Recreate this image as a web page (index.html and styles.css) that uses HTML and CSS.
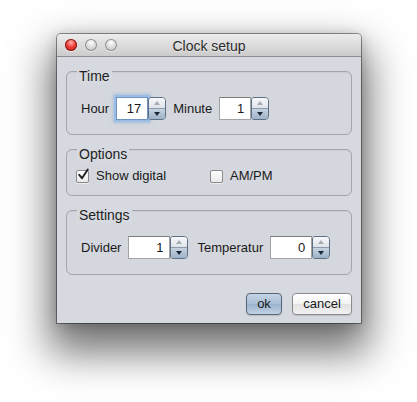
FILE: index.html
```html
<!DOCTYPE html>
<html>
<head>
<meta charset="utf-8">
<title>Clock setup</title>
<link rel="stylesheet" href="styles.css">
</head>
<body>
<div class="window">
  <div class="titlebar">
    <div class="lights">
      <span class="light red"></span>
      <span class="light"></span>
      <span class="light"></span>
    </div>
    <div class="title">Clock setup</div>
    <div></div>
  </div>
  <div class="content">
    <div class="group group-time">
      <div class="legend">Time</div>
      <div class="row">
        <span class="label">Hour</span>
        <div class="spinner">
          <div class="field focused">17</div>
          <div class="stepper"><span class="up"><i></i></span><span class="down"><i></i></span></div>
        </div>
        <span class="label">Minute</span>
        <div class="spinner">
          <div class="field">1</div>
          <div class="stepper"><span class="up"><i></i></span><span class="down"><i></i></span></div>
        </div>
      </div>
    </div>

    <div class="group group-options">
      <div class="legend">Options</div>
      <div class="checks">
        <label class="check">
          <span class="box"><svg width="14" height="14" viewBox="0 0 14 14"><path d="M3.2 6.8 L6 10.2 L11.8 1.5" fill="none" stroke="#1d1d1d" stroke-width="1.9" stroke-linecap="round" stroke-linejoin="round"/></svg></span>
          <span>Show digital</span>
        </label>
        <label class="check">
          <span class="box"></span>
          <span>AM/PM</span>
        </label>
      </div>
    </div>

    <div class="group group-settings">
      <div class="legend">Settings</div>
      <div class="row">
        <span class="label">Divider</span>
        <div class="spinner wide">
          <div class="field">1</div>
          <div class="stepper"><span class="up"><i></i></span><span class="down"><i></i></span></div>
        </div>
        <span class="label second">Temperatur</span>
        <div class="spinner wide">
          <div class="field">0</div>
          <div class="stepper"><span class="up"><i></i></span><span class="down"><i></i></span></div>
        </div>
      </div>
    </div>

    <div class="buttons">
      <button class="btn btn-default">ok</button>
      <button class="btn">cancel</button>
    </div>
  </div>
</div>
</body>
</html>
```

FILE: styles.css
```css
* { box-sizing: border-box; }

html, body {
  margin: 0;
  padding: 0;
  background: #ffffff;
}

body {
  font-family: "Liberation Sans", Arial, sans-serif;
  font-size: 13px;
  color: #1a1a1a;
  width: 417px;
  height: 402px;
  overflow: hidden;
}

.window {
  margin: 34px 0 0 57px;
  width: 304px;
  height: 289px;
  background: #d6d9df;
  border-radius: 4px 4px 0 0;
  box-shadow: 0 0 0 1px rgba(0, 0, 0, 0.4),
              0 22px 40px 8px rgba(0, 0, 0, 0.55),
              0 2px 14px rgba(0, 0, 0, 0.2);
}

.titlebar {
  height: 23px;
  display: grid;
  grid-template-columns: 1fr auto 1fr;
  align-items: start;
  background: linear-gradient(#ececec, #d9d9d9 60%, #cbcbcb);
  border-bottom: 1px solid #8c8c8c;
  border-radius: 4px 4px 0 0;
}

.lights {
  display: flex;
  gap: 8px;
  padding: 5px 0 0 8px;
}

.light {
  width: 12px;
  height: 12px;
  border-radius: 50%;
  background: radial-gradient(circle at 50% 30%, #fdfdfd 0%, #dcdcdc 45%, #bdbdbd 100%);
  box-shadow: inset 0 0 0 1px #8f8f8f, 0 1px 0 rgba(255,255,255,0.6);
}

.light.red {
  background: radial-gradient(circle at 50% 30%, #ffb3ad 0%, #ec3c35 45%, #b81a16 100%);
  box-shadow: inset 0 0 0 1px #8a1f1b, 0 1px 0 rgba(255,255,255,0.6);
}

.title {
  font-size: 14px;
  line-height: 20px;
  padding-top: 2px;
  color: #2b2b2b;
  text-shadow: 0 1px 0 rgba(255,255,255,0.5);
}

.content {
  padding: 14px 9px 8px 9px;
  display: flex;
  flex-direction: column;
}

.group {
  border: 1px solid #a2a5ab;
  border-radius: 6px;
  background: #d4d7dd;
  box-shadow: inset 0 1px 0 rgba(0,0,0,0.04);
}

.group + .group { margin-top: 14px; }

.legend {
  display: block;
  width: fit-content;
  margin: -4px 0 0 10px;
  padding: 0 2px;
  height: 16px;
  line-height: 16px;
  font-size: 14px;
  color: #1e1e1e;
  background: #d6d9df;
}

.row {
  display: flex;
  align-items: center;
  gap: 7px;
  height: 23px;
  margin-top: 13px;
  padding-left: 14px;
}

.group-time { padding-bottom: 14px; }
.group-settings { padding-bottom: 15px; }
.group-options { padding-bottom: 10px; }

.label {
  line-height: 23px;
  color: #1a1a1a;
}

.label.second { margin-left: 2px; }

.spinner {
  display: flex;
  width: 50px;
  height: 23px;
}

.spinner.wide { width: 60px; }

.field {
  flex: 1;
  background: #ffffff;
  border: 1px solid #a3a3a3;
  border-top-color: #7d7d7d;
  text-align: right;
  padding: 1px 6px 0 0;
  line-height: 20px;
  font-size: 13px;
}

.field.focused {
  border-color: #6f93c0;
  box-shadow: 0 0 0 2px #9bbde6, 0 0 3px 3px rgba(120, 165, 220, 0.45);
}

.stepper {
  width: 18px;
  display: flex;
  flex-direction: column;
  border: 1px solid #5f6f83;
  border-radius: 3px 4px 4px 3px;
  overflow: hidden;
}

.stepper span {
  flex: 1;
  display: flex;
  align-items: center;
  justify-content: center;
}

.stepper .up {
  background: linear-gradient(#f7f8fa, #dfe4ea);
  border-bottom: 1px solid #8a99ab;
}

.stepper .down {
  background: linear-gradient(#c6d3e1, #9db2c8);
}

.stepper .up i {
  width: 0;
  height: 0;
  border-left: 3px solid transparent;
  border-right: 3px solid transparent;
  border-bottom: 4px solid #a3abb5;
}

.stepper .down i {
  width: 0;
  height: 0;
  border-left: 3px solid transparent;
  border-right: 3px solid transparent;
  border-top: 4px solid #1c2633;
}

.checks {
  display: grid;
  grid-template-columns: 134px 134px;
  margin-top: 5px;
  padding-left: 9px;
  height: 18px;
}

.check {
  display: flex;
  align-items: center;
  gap: 7px;
  line-height: 18px;
}

.box {
  position: relative;
  width: 13px;
  height: 13px;
  border: 1px solid #8a8a8a;
  border-radius: 2px;
  background: linear-gradient(#ffffff, #e9e9e9);
  box-shadow: 0 1px 0 rgba(255,255,255,0.5);
}

.box svg {
  position: absolute;
  left: -1px;
  top: -3px;
}

.buttons {
  margin-top: 18px;
  display: flex;
  justify-content: flex-end;
  gap: 10px;
}

.btn {
  height: 22px;
  font-family: "Liberation Sans", Arial, sans-serif;
  font-size: 13px;
  color: #1a1a1a;
  border: 1px solid #8b8b8b;
  border-radius: 4px;
  background: linear-gradient(#ffffff, #f3f3f3 50%, #e2e2e2 52%, #f2f2f2);
  padding: 0 10px;
  line-height: 20px;
  width: 60px;
  box-shadow: 0 1px 1px rgba(0,0,0,0.12);
}

.btn-default {
  width: 36px;
  padding: 0;
  border-color: #546679;
  background: linear-gradient(#c5d4e4, #a8bed4 50%, #9cb4cc 52%, #c2d3e4);
}
```
